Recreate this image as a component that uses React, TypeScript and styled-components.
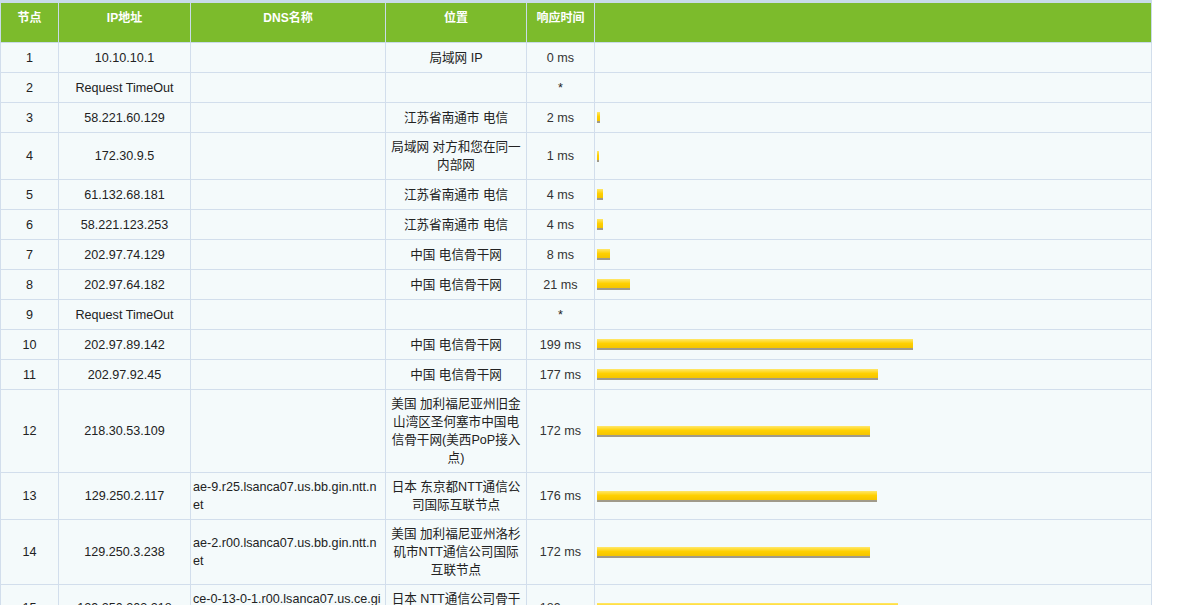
import React from "react";
import styled, { createGlobalStyle } from "styled-components";

const Global = createGlobalStyle`
  body { margin: 0; background: #fff; font-family: "Liberation Sans", "Noto Sans CJK SC", sans-serif; }
`;

const Table = styled.table`
  width: 1151px;
  border-collapse: collapse;
  border-top: 3px solid #c9dbe9;
  table-layout: fixed;
  font-size: 12.6px;
  color: #222;
`;

const Th = styled.th<{ w: number }>`
  width: ${(p) => p.w}px;
  background: #7cbb2c;
  color: #fff;
  font-weight: bold;
  font-size: 12px;
  height: 28px;
  padding: 0 0 5px;
  border: 1px solid #c9dbe9;
  border-top: none;
  line-height: 18px;
  vertical-align: top;
  padding-top: 6px;
`;

const Td = styled.td<{ left?: boolean }>`
  background: #f4fafb;
  border: 1px solid #d2deec;
  text-align: ${(p) => (p.left ? "left" : "center")};
  padding: 5px 2px;
  line-height: 18px;
  height: 19px;
  word-break: break-all;
`;

const Ms = styled.span`
  color: #333;
`;

const Bar = styled.div`
  height: 9px;
  margin-left: 0;
  background: linear-gradient(#ffe76a, #ffd000 50%, #f4c400);
  border-bottom: 2px solid #a09a8a;
`;

type Row = [string, string, string, string, number | null];
const rows: Row[] = [
  ["1", "10.10.10.1", "", "局域网 IP", 0],
  ["2", "Request TimeOut", "", "", null],
  ["3", "58.221.60.129", "", "江苏省南通市 电信", 2],
  ["4", "172.30.9.5", "", "局域网 对方和您在同一内部网", 1],
  ["5", "61.132.68.181", "", "江苏省南通市 电信", 4],
  ["6", "58.221.123.253", "", "江苏省南通市 电信", 4],
  ["7", "202.97.74.129", "", "中国 电信骨干网", 8],
  ["8", "202.97.64.182", "", "中国 电信骨干网", 21],
  ["9", "Request TimeOut", "", "", null],
  ["10", "202.97.89.142", "", "中国 电信骨干网", 199],
  ["11", "202.97.92.45", "", "中国 电信骨干网", 177],
  ["12", "218.30.53.109", "", "美国 加利福尼亚州旧金山湾区圣何塞市中国电信骨干网(美西PoP接入点)", 172],
  ["13", "129.250.2.117", "ae-9.r25.lsanca07.us.bb.gin.ntt.net", "日本 东京都NTT通信公司国际互联节点", 176],
  ["14", "129.250.3.238", "ae-2.r00.lsanca07.us.bb.gin.ntt.net", "美国 加利福尼亚州洛杉矶市NTT通信公司国际互联节点", 172],
  ["15", "129.250.203.218", "ce-0-13-0-1.r00.lsanca07.us.ce.gin.ntt.net", "日本 NTT通信公司骨干网", 189],
  ["16", "Request TimeOut", "", "", null],
];

export default function App() {
  return (
    <>
      <Global />
      <Table>
        <thead>
          <tr>
            <Th w={57}>节点</Th>
            <Th w={131}>IP地址</Th>
            <Th w={194}>DNS名称</Th>
            <Th w={140}>位置</Th>
            <Th w={67}>响应时间</Th>
            <Th w={556}></Th>
          </tr>
        </thead>
        <tbody>
          {rows.map(([n, ip, dns, loc, ms]) => (
            <tr key={n}>
              <Td>{n}</Td>
              <Td>{ip}</Td>
              <Td left>{dns}</Td>
              <Td>{loc}</Td>
              <Td>{ms === null ? "*" : <Ms>{ms} ms</Ms>}</Td>
              <Td left>
                {ms ? <Bar style={{ width: Math.max(2, Math.round(ms * 1.59)) }} /> : null}
              </Td>
            </tr>
          ))}
        </tbody>
      </Table>
    </>
  );
}
